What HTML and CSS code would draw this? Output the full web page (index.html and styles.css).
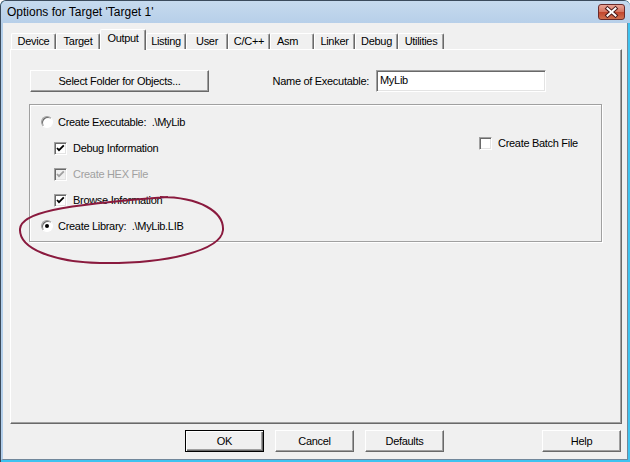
FILE: index.html
```html
<!DOCTYPE html>
<html lang="en">
<head>
    <meta charset="UTF-8">
    <title>Options for Target 'Target 1'</title>
    <link rel="stylesheet" href="styles.css">
</head>
<body>
    <div class="window">
        <div class="titlebar">
            <span class="title">Options for Target 'Target 1'</span>
            <span class="close-btn">
                <svg width="25" height="14" viewBox="0 0 25 14">
                    <path d="M8.5 3.5 L16.5 10.5 M16.5 3.5 L8.5 10.5" stroke="#4a1a1a" stroke-width="4" stroke-linecap="square"/>
                    <path d="M8.5 3.5 L16.5 10.5 M16.5 3.5 L8.5 10.5" stroke="#fff" stroke-width="2" stroke-linecap="square"/>
                </svg>
            </span>
        </div>

        <div class="client">
            <div class="tabs">
                <div class="tab tab-device">Device</div>
                <div class="tab tab-target">Target</div>
                <div class="tab tab-output active">Output</div>
                <div class="tab tab-listing">Listing</div>
                <div class="tab tab-user">User</div>
                <div class="tab tab-cc">C/C++</div>
                <div class="tab tab-asm">Asm</div>
                <div class="tab tab-linker">Linker</div>
                <div class="tab tab-debug">Debug</div>
                <div class="tab tab-utilities">Utilities</div>
            </div>

            <div class="panel">
                <div class="top-row">
                    <button class="btn btn-folder">Select Folder for Objects...</button>
                    <span class="exe-label">Name of Executable:</span>
                    <div class="text-input">MyLib</div>
                </div>

                <div class="groupbox">
                    <div class="group-left">
                        <div class="opt radio-opt">
                            <span class="radio"></span>
                            <span>Create Executable:&nbsp; .\MyLib</span>
                        </div>
                        <div class="opt check-opt">
                            <span class="check"><svg width="11" height="11" viewBox="0 0 11 11"><polyline points="2,5 4,7.2 8.8,2.4" fill="none" stroke="#000" stroke-width="1.8"/></svg></span>
                            <span>Debug Information</span>
                        </div>
                        <div class="opt check-opt disabled">
                            <span class="check"><svg width="11" height="11" viewBox="0 0 11 11"><polyline points="2,5 4,7.2 8.8,2.4" fill="none" stroke="#a0a0a0" stroke-width="1.8"/></svg></span>
                            <span>Create HEX File</span>
                        </div>
                        <div class="opt check-opt">
                            <span class="check"><svg width="11" height="11" viewBox="0 0 11 11"><polyline points="2,5 4,7.2 8.8,2.4" fill="none" stroke="#000" stroke-width="1.8"/></svg></span>
                            <span>Browse Information</span>
                        </div>
                        <div class="opt radio-opt lib-opt">
                            <span class="radio selected"></span>
                            <span>Create Library:&nbsp; .\MyLib.LIB</span>
                        </div>
                    </div>
                    <div class="group-right">
                        <div class="opt">
                            <span class="check"></span>
                            <span>Create Batch File</span>
                        </div>
                    </div>
                </div>
            </div>

            <div class="buttons">
                <button class="btn btn-default">OK</button>
                <button class="btn">Cancel</button>
                <button class="btn">Defaults</button>
                <button class="btn btn-help">Help</button>
            </div>
        </div>

        <!-- hand drawn mark around the library option -->
        <svg class="annotation" width="630" height="462" viewBox="0 0 630 462">
            <path d="M160 197 C200 197 224 212 223 230 C221 251 165 264 100 263 C52 262 19 248 20 229 C21 213 58 205 168 197"
                  fill="none" stroke="#8a1a3e" stroke-width="2"/>
        </svg>
    </div>
</body>
</html>
```

FILE: styles.css
```css
* {
    margin: 0;
    padding: 0;
    box-sizing: border-box;
}

body {
    font-family: 'Liberation Sans', Arial, sans-serif;
    font-size: 11px;
    letter-spacing: -0.3px;
    color: #000;
    background: #fff;
}

.window {
    position: relative;
    width: 630px;
    height: 462px;
    display: flex;
    flex-direction: column;
    background: #3ec3f0;
    border-top: 1px solid #3b4b5c;
    border-left: 1px solid #3b4b5c;
    border-radius: 6px 6px 0 0;
    overflow: hidden;
}

.titlebar {
    height: 22px;
    display: flex;
    align-items: center;
    justify-content: space-between;
    padding: 0 5px 0 6px;
    background: linear-gradient(#c6daee, #b7cfe9);
}

.title {
    font-size: 12px;
    letter-spacing: 0;
}

.close-btn {
    width: 27px;
    height: 16px;
    display: flex;
    align-items: center;
    justify-content: center;
    border: 1px solid #6a2a2a;
    border-radius: 3px;
    background: linear-gradient(#e9a597, #d5735f 50%, #c2452d 51%, #d0704f);
}

.client {
    flex: 1;
    margin: 0 2px 2px 0;
    background: #f0f0f0;
    border-left: 2px solid #b3cfeb;
    border-right: 1px solid #71879b;
    border-bottom: 1px solid #71879b;
    display: flex;
    flex-direction: column;
}

/* tabs */

.tabs {
    display: flex;
    align-items: flex-end;
    height: 20px;
    margin: 6px 0 0 8px;
    position: relative;
    z-index: 1;
}

.tab {
    height: 16px;
    line-height: 14px;
    text-align: center;
    border-top: 1px solid #fff;
    border-left: 1px solid #fff;
    border-right: 1px solid #696969;
    box-shadow: inset -1px 0 0 #a0a0a0;
    border-radius: 2px 2px 0 0;
}

.tab.active {
    height: 21px;
    margin-bottom: -1px;
    line-height: 16px;
    background: #f0f0f0;
}

.tab-device { width: 45px; }
.tab-target { width: 44px; }
.tab-output { width: 46px; }
.tab-listing { width: 40px; }
.tab-user { width: 42px; }
.tab-cc { width: 42px; }
.tab-asm { width: 44px; text-align: left; padding-left: 6px; }
.tab-linker { width: 41px; }
.tab-debug { width: 43px; }
.tab-utilities { width: 46px; }

/* page */

.panel {
    width: 612px;
    height: 375px;
    margin-left: 7px;
    border: 1px solid;
    border-color: #fff #696969 #696969 #fff;
    box-shadow: inset -1px -1px 0 #a0a0a0;
}

.top-row {
    display: flex;
    align-items: center;
    padding: 20px 75px 0 19px;
}

.btn {
    height: 22px;
    width: 79px;
    font-family: inherit;
    font-size: 11px;
    letter-spacing: -0.3px;
    color: #000;
    background: #f0f0f0;
    border: 1px solid;
    border-color: #fff #696969 #696969 #fff;
    box-shadow: inset -1px -1px 0 #a0a0a0;
}

.btn-folder {
    width: 179px;
}

.exe-label {
    margin-left: auto;
    margin-right: 7px;
}

.text-input {
    width: 170px;
    height: 22px;
    padding: 2px 3px;
    background: #fff;
    border: 1px solid;
    border-color: #a0a0a0 #fff #fff #a0a0a0;
    box-shadow: inset 1px 1px 0 #696969, inset -1px -1px 0 #e3e3e3;
    line-height: 14px;
}

.groupbox {
    width: 573px;
    height: 138px;
    margin: 12px 0 0 18px;
    border: 1px solid #a0a0a0;
    box-shadow: 1px 1px 0 #fff, inset 1px 1px 0 #fff;
    display: flex;
}

.group-left {
    flex: 1;
    padding-top: 9px;
}

.group-right {
    width: 122px;
    padding-top: 30px;
}

.opt {
    height: 16px;
    display: flex;
    align-items: center;
}

.group-left .opt + .opt {
    margin-top: 10px;
}

.group-left .lib-opt {
    margin-top: 12px;
}

.radio-opt {
    padding-left: 11px;
}

.check-opt {
    padding-left: 24px;
}

.radio {
    width: 12px;
    height: 12px;
    margin-right: 5px;
    border-radius: 50%;
    background: #fff;
    border: 1px solid;
    border-color: #a0a0a0 #fff #fff #a0a0a0;
    box-shadow: inset 1px 1px 0 #696969;
    position: relative;
}

.radio.selected::after {
    content: "";
    position: absolute;
    left: 3px;
    top: 3px;
    width: 4px;
    height: 4px;
    border-radius: 50%;
    background: #000;
}

.check {
    width: 13px;
    height: 13px;
    margin-right: 6px;
    background: #fff;
    border: 1px solid;
    border-color: #a0a0a0 #fff #fff #a0a0a0;
    box-shadow: inset 1px 1px 0 #696969, inset -1px -1px 0 #e3e3e3;
    display: flex;
    align-items: center;
    justify-content: center;
}

.check svg {
    display: block;
}

.disabled {
    color: #a0a0a0;
}

.disabled .check {
    background: #f0f0f0;
}

/* bottom buttons */

.buttons {
    display: flex;
    gap: 11px;
    margin-top: 6px;
    padding: 0 6px 0 182px;
}

.btn-default {
    border-color: #000;
    box-shadow: inset 1px 1px 0 #fff, inset -1px -1px 0 #696969, inset -2px -2px 0 #a0a0a0;
}

.btn-help {
    margin-left: auto;
}

.annotation {
    position: absolute;
    left: -1px;
    top: -1px;
    pointer-events: none;
}
```
